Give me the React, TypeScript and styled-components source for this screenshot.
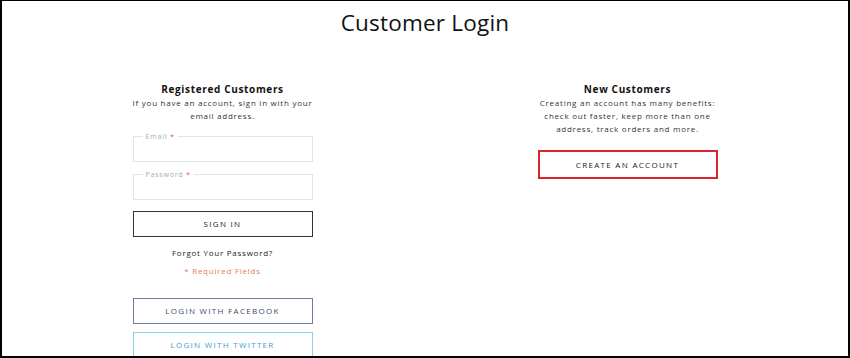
import styled, { createGlobalStyle } from "styled-components";

const GlobalStyle = createGlobalStyle`
  * { box-sizing: border-box; }
  html, body { margin: 0; padding: 0; background: #fff; }
  body { font-family: "Open Sans", "Liberation Sans", sans-serif; color: #222; }
`;

const Page = styled.div`
  width: 850px;
  height: 358px;
  overflow: hidden;
  border-style: solid;
  border-color: #000;
  border-width: 1px 2px 2px 2px;
  background: #fff;
  padding-top: 7px;
`;

const Title = styled.h1`
  margin: 0;
  text-align: center;
  font-size: 22.5px;
  line-height: 29px;
  font-weight: 400;
  letter-spacing: 0.2px;
  color: #111;
`;

const Columns = styled.div`
  display: grid;
  grid-template-columns: 180px 180px;
  justify-content: center;
  column-gap: 225px;
  margin-top: 45px;
`;

const Column = styled.section`
  display: flex;
  flex-direction: column;
  align-items: stretch;
  text-align: center;
`;

const Heading = styled.h2`
  margin: 0;
  font-size: 10px;
  line-height: 14px;
  font-weight: 700;
  letter-spacing: 0.65px;
  color: #111;
`;

const Text = styled.p`
  margin: 1px -6px 0;
  font-size: 8px;
  line-height: 12.8px;
  letter-spacing: 0.75px;
  color: #333;
`;

const Field = styled.fieldset<{ $top: number }>`
  margin: ${(p) => p.$top}px 0 0;
  padding: 0 9px;
  border: 1px solid #e4e4e4;
  height: 29px;
  text-align: left;
`;

const Legend = styled.legend`
  padding: 0 3px;
  font-size: 7px;
  line-height: 8px;
  letter-spacing: 0.8px;
  color: #aaa;
  span { color: #d9534f; }
`;

const Button = styled.button<{ $tone: string; $text: string; $width?: number; $top: number; $height?: number }>`
  display: block;
  width: 100%;
  height: ${(p) => p.$height ?? 26}px;
  margin-top: ${(p) => p.$top}px;
  background: #fff;
  border: ${(p) => p.$width ?? 1}px solid ${(p) => p.$tone};
  color: ${(p) => p.$text};
  font-family: "Open Sans", "Liberation Sans", sans-serif;
  font-size: 8px;
  font-weight: 500;
  letter-spacing: 1.3px;
  text-transform: uppercase;
  cursor: pointer;
`;

const Link = styled.a<{ $color: string; $top: number }>`
  display: block;
  margin-top: ${(p) => p.$top}px;
  font-size: 8px;
  line-height: 13px;
  letter-spacing: 0.75px;
  color: ${(p) => p.$color};
  text-decoration: none;
`;

export default function App() {
  return (
    <>
      <GlobalStyle />
      <Page>
        <Title>Customer Login</Title>
        <Columns>
          <Column>
            <Heading>Registered Customers</Heading>
            <Text>
              If you have an account, sign in with your
              <br />
              email address.
            </Text>
            <Field $top={10}>
              <Legend>
                Email <span>*</span>
              </Legend>
            </Field>
            <Field $top={9}>
              <Legend>
                Password <span>*</span>
              </Legend>
            </Field>
            <Button $top={11} $tone="#333" $text="#222">Sign In</Button>
            <Link $top={9} $color="#222">Forgot Your Password?</Link>
            <Link $top={5} $color="#e7795c">* Required Fields</Link>
            <Button $top={21} $tone="#6f7d9c" $text="#3c4a6a">Login with Facebook</Button>
            <Button $top={8} $tone="#86d3f0" $text="#3f9bd8">Login with Twitter</Button>
          </Column>
          <Column>
            <Heading>New Customers</Heading>
            <Text>
              Creating an account has many benefits:
              <br />
              check out faster, keep more than one
              <br />
              address, track orders and more.
            </Text>
            <Button $top={15} $tone="#d9262c" $text="#222" $width={2} $height={29}>
              Create an Account
            </Button>
          </Column>
        </Columns>
      </Page>
    </>
  );
}
